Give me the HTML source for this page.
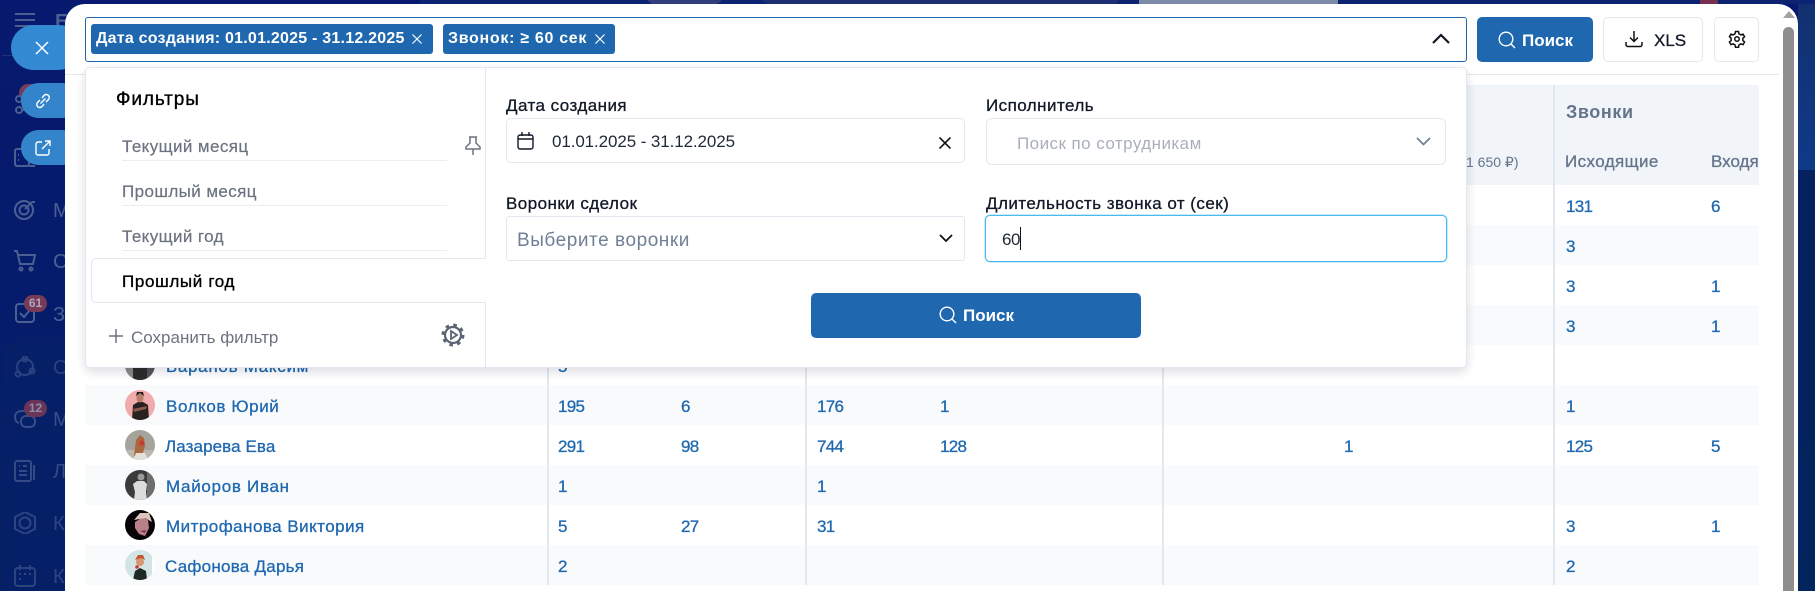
<!DOCTYPE html>
<html lang="ru"><head><meta charset="utf-8"><title>Отчёт</title>
<style>
html,body{margin:0;padding:0;width:1815px;height:591px;overflow:hidden;background:#04196b}
body{position:relative;font-family:"Liberation Sans","Noto Sans CJK SC",sans-serif;font-size:17px;color:#111827}
.a{position:absolute;white-space:nowrap}
.t{position:absolute;white-space:nowrap;line-height:24px;height:24px}
.box{position:absolute;box-sizing:border-box}
.lnk{color:#1f68b0;-webkit-text-stroke:.3px #1f68b0}
.n{letter-spacing:-.7px;margin-top:1px}
.nm{margin-top:1px}
.lb{font-size:17px;letter-spacing:.45px;color:#111827;-webkit-text-stroke:.3px #111827}
.it{font-size:17px;letter-spacing:.4px;color:#6b7280;-webkit-text-stroke:.2px #6b7280}
.row{position:absolute;left:85px;width:1674px;height:40px}
.v{position:absolute;width:2px;background:#e2e8f0;top:85px;height:500px}
.av{position:absolute;left:125px;width:30px;height:30px}
.sb{position:absolute;left:14px;width:22px;height:22px;fill:none;stroke:#4a5f92;stroke-width:2}
.sl{position:absolute;left:53px;color:#4a5f92;font-size:20px;line-height:24px}
.badge{position:absolute;left:24px;width:23px;height:17px;border-radius:9px;background:#7a3a56;color:#a9a9bd;font-size:12px;font-weight:bold;line-height:17px;text-align:center}
</style></head><body>
<div class="box" style="left:0;top:0;width:1815px;height:591px;background:linear-gradient(180deg,#06196e 0%,#051c6c 50%,#05215f 100%)"></div>
<div class="box" style="left:1798px;top:0;width:17px;height:170px;background:linear-gradient(180deg,#12306f,#0f3a87)"></div>
<div class="box" style="left:1798px;top:170px;width:17px;height:421px;background:linear-gradient(180deg,#04205e,#03255e)"></div>
<div class="box" style="left:420px;top:0;width:1395px;height:4px;background:#0d2270"></div>
<div class="box" style="left:647px;top:-10px;width:75px;height:14px;background:#303f7c;border-radius:30px"></div>
<div class="box" style="left:762px;top:-10px;width:358px;height:14px;background:#1c2f72;border-radius:20px"></div>
<div class="box" style="left:1139px;top:0;width:199px;height:4px;background:#7c8ca8"></div>
<div class="box" style="left:1700px;top:0;width:18px;height:4px;background:#74304e"></div>

<!-- dimmed sidebar -->
<svg class="a" style="left:15px;top:12px" width="21" height="16" fill="none" stroke="#4a5f92" stroke-width="2"><path d="M0 2h20M0 8h20M0 14h20"/></svg>
<div class="sl" style="top:10px;left:55px;font-weight:bold;font-size:20px">Б</div>
<div class="box" style="left:2px;top:55px;width:63px;height:1px;background:#1f3478"></div>
<div class="box" style="left:19px;top:84px;width:22px;height:18px;border-radius:9px;background:#7a3a56"></div>
<svg class="sb" style="top:93px" viewBox="0 0 22 22"><circle cx="5" cy="6" r="3"/><circle cx="5" cy="17" r="3"/><path d="M8 6h8M8 17h8"/></svg>
<svg class="sb" style="top:146px" viewBox="0 0 22 22"><rect x="1" y="3" width="14" height="17" rx="2"/><path d="M4 14h1M4 9h1M15 20h6"/></svg>
<svg class="sb" style="top:198px;left:14px" viewBox="0 0 22 22"><circle cx="10" cy="12" r="9"/><circle cx="10" cy="12" r="4.500"/><path d="M11 11l7-7M18 4l3 0"/></svg>
<div class="sl" style="top:199px">М</div>
<svg class="sb" style="top:250px" viewBox="0 0 22 22"><path d="M0 1h3l3 13h13l2-9H4"/><circle cx="7" cy="19" r="1.500"/><circle cx="17" cy="19" r="1.500"/></svg>
<div class="sl" style="top:250px">С</div>
<svg class="sb" style="top:302px" viewBox="0 0 22 22"><rect x="2" y="2" width="18" height="18" rx="3"/><path d="M6 11l4 4 6-7"/></svg>
<div class="badge" style="top:295px">61</div>
<div class="sl" style="top:303px">За</div>
<div class="box" style="left:3px;top:343px;width:62px;height:248px;background:#052067;border-radius:12px 0 0 0"></div>
<svg class="sb" style="top:356px;stroke:#2a4280" viewBox="0 0 22 22"><circle cx="11" cy="11" r="8"/><circle cx="11" cy="3" r="2.500"/><circle cx="4" cy="18" r="2.500"/><circle cx="18" cy="15" r="2.500"/></svg>
<div class="sl" style="top:356px;color:#2a4280">Со</div>
<svg class="sb" style="top:408px;stroke:#374e8a" viewBox="0 0 22 22"><path d="M5 15c-3-1-4-3-4-6 0-4 3-6 7-6h4c4 0 6 2 7 4"/><rect x="7" y="8" width="14" height="11" rx="5"/></svg>
<div class="badge" style="top:400px;background:#6a3558;color:#8f90aa">12</div>
<div class="sl" style="top:408px;color:#374e8a">М</div>
<svg class="sb" style="top:460px;stroke:#334a86" viewBox="0 0 22 22"><rect x="1" y="1" width="16" height="20" rx="2"/><path d="M5 6h1M9 6h4M5 11h8M5 15h8M20 5v15"/></svg>
<div class="sl" style="top:460px;color:#334a86">Л</div>
<svg class="sb" style="top:512px;stroke:#2c4482" viewBox="0 0 22 22"><path d="M11 0l10 5v12l-10 5-10-5V5z"/><circle cx="11" cy="11" r="5.500"/></svg>
<div class="sl" style="top:512px;color:#2c4482">К</div>
<svg class="sb" style="top:565px;stroke:#2c4482" viewBox="0 0 22 22"><rect x="1" y="3" width="20" height="18" rx="3"/><path d="M6 0v5M16 0v5M5 9h2M10 9h2M15 9h2M5 14h2"/></svg>
<div class="sl" style="top:565px;color:#2c4482">К</div>

<!-- floating pills -->
<div class="box" style="left:11px;top:25px;width:70px;height:45px;background:#338ad2;border-radius:23px"></div>
<svg class="a" style="left:35px;top:41px" width="14" height="14" fill="none" stroke="#fff" stroke-width="1.500"><path d="M1 1l12 12M13 1L1 13"/></svg>
<div class="box" style="left:21px;top:83px;width:60px;height:35px;background:#3484cb;border-radius:18px"></div>
<svg class="a" style="left:35px;top:93px" width="16" height="16" viewBox="0 0 16 16" fill="none" stroke="#fff" stroke-width="1.400"><path d="M7 5l2-2.500a3 3 0 0 1 4.500 4L11 9M9 11l-2 2.500a3 3 0 0 1-4.500-4L5 7M5.500 10.500l5-5"/></svg>
<div class="box" style="left:21px;top:130px;width:60px;height:35px;background:#3484cb;border-radius:18px"></div>
<svg class="a" style="left:35px;top:140px" width="16" height="16" viewBox="0 0 16 16" fill="none" stroke="#fff" stroke-width="1.400"><path d="M7 2H3a2 2 0 0 0-2 2v9a2 2 0 0 0 2 2h9a2 2 0 0 0 2-2V9M7 9l8-8M10 1h5v5"/></svg>

<!-- modal -->
<div class="box" style="left:65px;top:4px;width:1733px;height:600px;background:#fff;border-radius:20px 20px 0 0"></div>
<div class="box" style="left:1783px;top:27px;width:11px;height:570px;background:#8e8e8e;border-radius:6px 6px 0 0"></div>
<svg class="a" style="left:1782px;top:11px" width="14" height="8"><path d="M7 0l6 7H1z" fill="#a3a3a3"/></svg>

<!-- top bar -->
<div class="box" style="left:85px;top:17px;width:1382px;height:45px;border:1px solid #1f68b0;border-radius:3px"></div>
<div class="box" style="left:91px;top:24px;width:342px;height:30px;background:#1f68b0;border-radius:3px"></div>
<div class="t" style="left:96px;top:27px;color:#fff;font-weight:bold;font-size:16px;letter-spacing:.23px">Дата создания: 01.01.2025 - 31.12.2025</div>
<svg class="a" style="left:412px;top:34px" width="10" height="10" fill="none" stroke="#fff" stroke-width="1.200"><path d="M.5.5l9 9M9.500.5l-9 9"/></svg>
<div class="box" style="left:443px;top:24px;width:172px;height:30px;background:#1f68b0;border-radius:3px"></div>
<div class="t" style="left:448px;top:27px;color:#fff;font-weight:bold;font-size:16px;letter-spacing:.7px">Звонок: ≥ 60 сек</div>
<svg class="a" style="left:595px;top:34px" width="10" height="10" fill="none" stroke="#fff" stroke-width="1.200"><path d="M.5.5l9 9M9.500.5l-9 9"/></svg>
<svg class="a" style="left:1432px;top:33px" width="18" height="12" fill="none" stroke="#111827" stroke-width="2.200"><path d="M1 10l8-8 8 8"/></svg>

<div class="box" style="left:1477px;top:17px;width:116px;height:45px;background:#1f68b0;border-radius:5px"></div>
<svg class="a" style="left:1498px;top:31px" width="18" height="18" fill="none" stroke="#fff" stroke-width="1.400"><circle cx="8" cy="8" r="6.800"/><path d="M13 13l4 4"/></svg>
<div class="t" style="left:1522px;top:29px;color:#fff;font-weight:bold;font-size:17px">Поиск</div>
<div class="box" style="left:1603px;top:17px;width:100px;height:45px;border:1px solid #e2e8f0;border-radius:5px;background:#fff"></div>
<svg class="a" style="left:1625px;top:30px" width="18" height="18" fill="none" stroke="#111" stroke-width="1.500"><path d="M9 1v10M5 7.500l4 4 4-4M1 12v2.500a2 2 0 0 0 2 2h12a2 2 0 0 0 2-2V12"/></svg>
<div class="t" style="left:1654px;top:29px;font-size:17px;color:#111827;-webkit-text-stroke:.3px #111827">XLS</div>
<div class="box" style="left:1714px;top:17px;width:45px;height:45px;border:1px solid #e2e8f0;border-radius:5px;background:#fff"></div>
<svg class="a" style="left:1728px;top:30px" width="18" height="18" viewBox="0 0 24 24" fill="none" stroke="#111" stroke-width="2"><circle cx="12" cy="12" r="3"/><path d="M10 2h4l.6 3 2.600 1.500 2.900-1 2 3.500-2.300 2v3l2.300 2-2 3.500-2.900-1-2.600 1.500-.6 3h-4l-.6-3-2.600-1.500-2.900 1-2-3.500 2.300-2v-3l-2.300-2 2-3.500 2.900 1L9.400 5z"/></svg>
<div class="box" style="left:65px;top:74px;width:1714px;height:1px;background:#e2e8f0"></div>

<!-- table -->
<div class="box" style="left:85px;top:85px;width:1674px;height:100px;background:#f1f5f9"></div>
<div class="row" style="top:225px;background:#f8fafc"></div>
<div class="row" style="top:305px;background:#f8fafc"></div>
<div class="row" style="top:385px;background:#f8fafc"></div>
<div class="row" style="top:465px;background:#f8fafc"></div>
<div class="row" style="top:545px;background:#f8fafc"></div>
<div class="v" style="left:547px"></div><div class="v" style="left:805px"></div><div class="v" style="left:1162px"></div><div class="v" style="left:1553px"></div>
<div class="t" style="left:1566px;top:100px;color:#64748b;font-weight:bold;font-size:18px;letter-spacing:.6px">Звонки</div>
<div class="t" style="left:1565px;top:150px;color:#64748b;font-size:17px;letter-spacing:.4px;-webkit-text-stroke:.3px #64748b">Исходящие</div>
<div class="box" style="left:1711px;top:150px;width:48px;height:24px;overflow:hidden"><div class="t" style="left:0;top:0;color:#64748b;font-size:17px;-webkit-text-stroke:.3px #64748b">Входящие</div></div>
<div class="t" style="left:1466px;top:150px;color:#64748b;font-size:14px">1 650 ₽)</div>

<div class="t lnk n" style="left:1566px;top:194px">131</div><div class="t lnk n" style="left:1711px;top:194px">6</div>
<div class="t lnk n" style="left:1566px;top:234px">3</div>
<div class="t lnk n" style="left:1566px;top:274px">3</div><div class="t lnk n" style="left:1711px;top:274px">1</div>
<div class="t lnk n" style="left:1566px;top:314px">3</div><div class="t lnk n" style="left:1711px;top:314px">1</div>

<!-- rows -->
<svg class="av" style="top:350px" viewBox="0 0 30 30"><defs><clipPath id="c"><circle cx="15" cy="15" r="15"/></clipPath></defs><g clip-path="url(#c)"><rect width="30" height="30" fill="#555"/><path d="M8 30V14l7-10 7 10v16z" fill="#2c2c2c"/><path d="M0 0h8v30H0z" fill="#8a8a8a"/></g></svg>
<div class="t lnk nm" style="left:166px;top:354px;letter-spacing:.7px">Баранов Максим</div>
<div class="t lnk n" style="left:558px;top:354px">5</div>

<svg class="av" style="top:390px" viewBox="0 0 30 30"><g clip-path="url(#c)"><rect width="30" height="30" fill="#f2abac"/><path d="M7 30l1-15 5-3h5l5 3 1 15z" fill="#27211f"/><path d="M8 19l14-3-1 3-12 3z" fill="#8a5a4a"/><ellipse cx="15" cy="8" rx="3.500" ry="4.500" fill="#b57f6a"/><path d="M11 6l4-3 4 3-1-4h-6z" fill="#201a18"/></g></svg>
<div class="t lnk nm" style="left:166px;top:394px;letter-spacing:.6px">Волков Юрий</div>
<div class="t lnk n" style="left:558px;top:394px">195</div><div class="t lnk n" style="left:681px;top:394px">6</div><div class="t lnk n" style="left:817px;top:394px">176</div><div class="t lnk n" style="left:940px;top:394px">1</div><div class="t lnk n" style="left:1566px;top:394px">1</div>

<svg class="av" style="top:430px" viewBox="0 0 30 30"><g clip-path="url(#c)"><rect width="30" height="30" fill="#a4a39c"/><rect y="20" width="30" height="10" fill="#b9b7ae"/><path d="M9 26l2-16 4-5 4 3 1 8-3 10z" fill="#a9683d"/><circle cx="17" cy="13" r="2.500" fill="#c8392e"/><path d="M8 30l3-7h9l3 7z" fill="#e4e1d8"/></g></svg>
<div class="t lnk nm" style="left:165px;top:434px;letter-spacing:.1px">Лазарева Ева</div>
<div class="t lnk n" style="left:558px;top:434px">291</div><div class="t lnk n" style="left:681px;top:434px">98</div><div class="t lnk n" style="left:817px;top:434px">744</div><div class="t lnk n" style="left:940px;top:434px">128</div><div class="t lnk n" style="left:1344px;top:434px">1</div><div class="t lnk n" style="left:1566px;top:434px">125</div><div class="t lnk n" style="left:1711px;top:434px">5</div>

<svg class="av" style="top:470px" viewBox="0 0 30 30"><g clip-path="url(#c)"><rect width="30" height="30" fill="#3b3b3b"/><path d="M22 0h8v30h-8z" fill="#6d6d6d"/><path d="M8 14l4-3h7l3 3-1 8 1 8H9l1-8z" fill="#dcdcdc"/><circle cx="16" cy="7" r="3.500" fill="#9a9a9a"/></g></svg>
<div class="t lnk nm" style="left:166px;top:474px;letter-spacing:.7px">Майоров Иван</div>
<div class="t lnk n" style="left:558px;top:474px">1</div><div class="t lnk n" style="left:817px;top:474px">1</div>

<svg class="av" style="top:510px" viewBox="0 0 30 30"><g clip-path="url(#c)"><rect width="30" height="30" fill="#070306"/><path d="M10 12l8-5 5 3 1 8-4 8-6-2-4-6z" fill="#b9808a"/><path d="M9 10l6-7h9l3 9-7-4z" fill="#d9c7bd"/><path d="M15 21l6-1-1 3z" fill="#8e2f4a"/></g></svg>
<div class="t lnk nm" style="left:166px;top:514px;letter-spacing:.47px">Митрофанова Виктория</div>
<div class="t lnk n" style="left:558px;top:514px">5</div><div class="t lnk n" style="left:681px;top:514px">27</div><div class="t lnk n" style="left:817px;top:514px">31</div><div class="t lnk n" style="left:1566px;top:514px">3</div><div class="t lnk n" style="left:1711px;top:514px">1</div>

<svg class="av" style="top:550px" viewBox="0 0 30 30"><g clip-path="url(#c)"><rect width="30" height="30" fill="#d3e4e6"/><rect x="27" width="3" height="30" fill="#fff"/><path d="M8 30l2-9 5-3 6 3 1 9z" fill="#1d2a23"/><circle cx="15" cy="12" r="4" fill="#d59672"/><path d="M10 10l3-5h5l2 5-4-2z" fill="#c2562f"/><circle cx="12" cy="17" r="1.800" fill="#c9392e"/></g></svg>
<div class="t lnk nm" style="left:165px;top:554px;letter-spacing:.25px">Сафонова Дарья</div>
<div class="t lnk n" style="left:558px;top:554px">2</div><div class="t lnk n" style="left:1566px;top:554px">2</div>

<!-- dropdown panel -->
<div class="box" style="left:85px;top:67px;width:1382px;height:301px;background:#fff;border:1px solid #e2e8f0;border-radius:5px;box-shadow:0 4px 10px rgba(15,23,42,.14)"></div>
<div class="box" style="left:485px;top:68px;width:1px;height:190px;background:#e2e8f0"></div>
<div class="box" style="left:485px;top:302px;width:1px;height:65px;background:#e2e8f0"></div>
<div class="box" style="left:91px;top:258px;width:395px;height:45px;border:1px solid #e2e8f0;border-right:0;border-radius:5px 0 0 5px;background:#fff"></div>
<div class="t" style="left:116px;top:88px;color:#000;font-size:19px;letter-spacing:.9px;-webkit-text-stroke:.35px #000">Фильтры</div>
<div class="t it" style="left:122px;top:135px">Текущий месяц</div>
<div class="t it" style="left:122px;top:180px">Прошлый месяц</div>
<div class="t it" style="left:122px;top:225px">Текущий год</div>
<div class="t" style="left:122px;top:270px;color:#000;font-size:17px;letter-spacing:.65px;-webkit-text-stroke:.35px #000">Прошлый год</div>
<div class="box" style="left:122px;top:160px;width:325px;height:1px;background:#e8edf3"></div>
<div class="box" style="left:122px;top:205px;width:325px;height:1px;background:#e8edf3"></div>
<div class="box" style="left:122px;top:250px;width:325px;height:1px;background:#e8edf3"></div>
<svg class="a" style="left:465px;top:136px" width="16" height="20" viewBox="0 0 16 20" fill="none" stroke="#6b7280" stroke-width="1.500"><path d="M4 1h8M5 1v6l-4 4v2h14v-2l-4-4V1M8 13v6"/></svg>
<svg class="a" style="left:109px;top:329px" width="14" height="14" fill="none" stroke="#6b7280" stroke-width="1.500"><path d="M7 0v14M0 7h14"/></svg>
<div class="t" style="left:131px;top:326px;color:#6b7280;font-size:17px">Сохранить фильтр</div>
<svg class="a" style="left:441px;top:323px" width="24" height="24" viewBox="0 0 24 24" fill="none" stroke="#5b6472"><circle cx="12" cy="12" r="8" stroke-width="2.200"/><circle cx="12" cy="12" r="10" stroke-width="3" stroke-dasharray="3.500 4.350"/><path d="M10 8l6 4-6 4z" stroke-width="1.800"/></svg>

<div class="t lb" style="left:506px;top:94px">Дата создания</div>
<div class="box" style="left:506px;top:118px;width:459px;height:45px;border:1px solid #e2e8f0;border-radius:5px"></div>
<svg class="a" style="left:517px;top:132px" width="18" height="18" viewBox="0 0 18 18" fill="none" stroke="#111827" stroke-width="1.400"><rect x="1" y="3" width="15" height="14" rx="2"/><path d="M1 7h15M5 0v4M12 0v4"/></svg>
<div class="t" style="left:552px;top:130px;font-size:17px;color:#1f2937;letter-spacing:-.1px">01.01.2025 - 31.12.2025</div>
<svg class="a" style="left:939px;top:137px" width="12" height="12" fill="none" stroke="#111" stroke-width="1.600"><path d="M.5.5l11 11M11.500.5l-11 11"/></svg>

<div class="t lb" style="left:506px;top:192px">Воронки сделок</div>
<div class="box" style="left:506px;top:216px;width:459px;height:45px;border:1px solid #e2e8f0;border-radius:3px"></div>
<div class="t" style="left:517px;top:229px;font-size:19px;letter-spacing:.55px;color:#718096">Выберите воронки</div>
<svg class="a" style="left:939px;top:234px" width="14" height="10" fill="none" stroke="#111" stroke-width="1.800"><path d="M1 1l6 6 6-6"/></svg>

<div class="t lb" style="left:986px;top:94px">Исполнитель</div>
<div class="box" style="left:986px;top:118px;width:460px;height:47px;border:1px solid #e2e8f0;border-radius:6px"></div>
<div class="t" style="left:1017px;top:132px;font-size:17px;letter-spacing:.45px;color:#a9afb9">Поиск по сотрудникам</div>
<svg class="a" style="left:1416px;top:137px" width="15" height="10" fill="none" stroke="#718096" stroke-width="1.800"><path d="M1 1l6.500 6.500L14 1"/></svg>

<div class="t lb" style="left:986px;top:192px">Длительность звонка от (сек)</div>
<div class="box" style="left:985px;top:215px;width:462px;height:47px;border:1px solid #4cb8f0;border-radius:5px;box-shadow:0 0 0 .5px #8fd4f7"></div>
<div class="t" style="left:1002px;top:228px;font-size:17px;letter-spacing:-.5px;color:#1f2937">60</div>
<div class="box" style="left:1020px;top:227px;width:1px;height:23px;background:#111"></div>

<div class="box" style="left:811px;top:293px;width:330px;height:45px;background:#1f68b0;border-radius:5px"></div>
<svg class="a" style="left:939px;top:306px" width="18" height="18" fill="none" stroke="#fff" stroke-width="1.400"><circle cx="8" cy="8" r="6.800"/><path d="M13 13l4 4"/></svg>
<div class="t" style="left:963px;top:304px;color:#fff;font-weight:bold;font-size:17px">Поиск</div>
</body></html>
